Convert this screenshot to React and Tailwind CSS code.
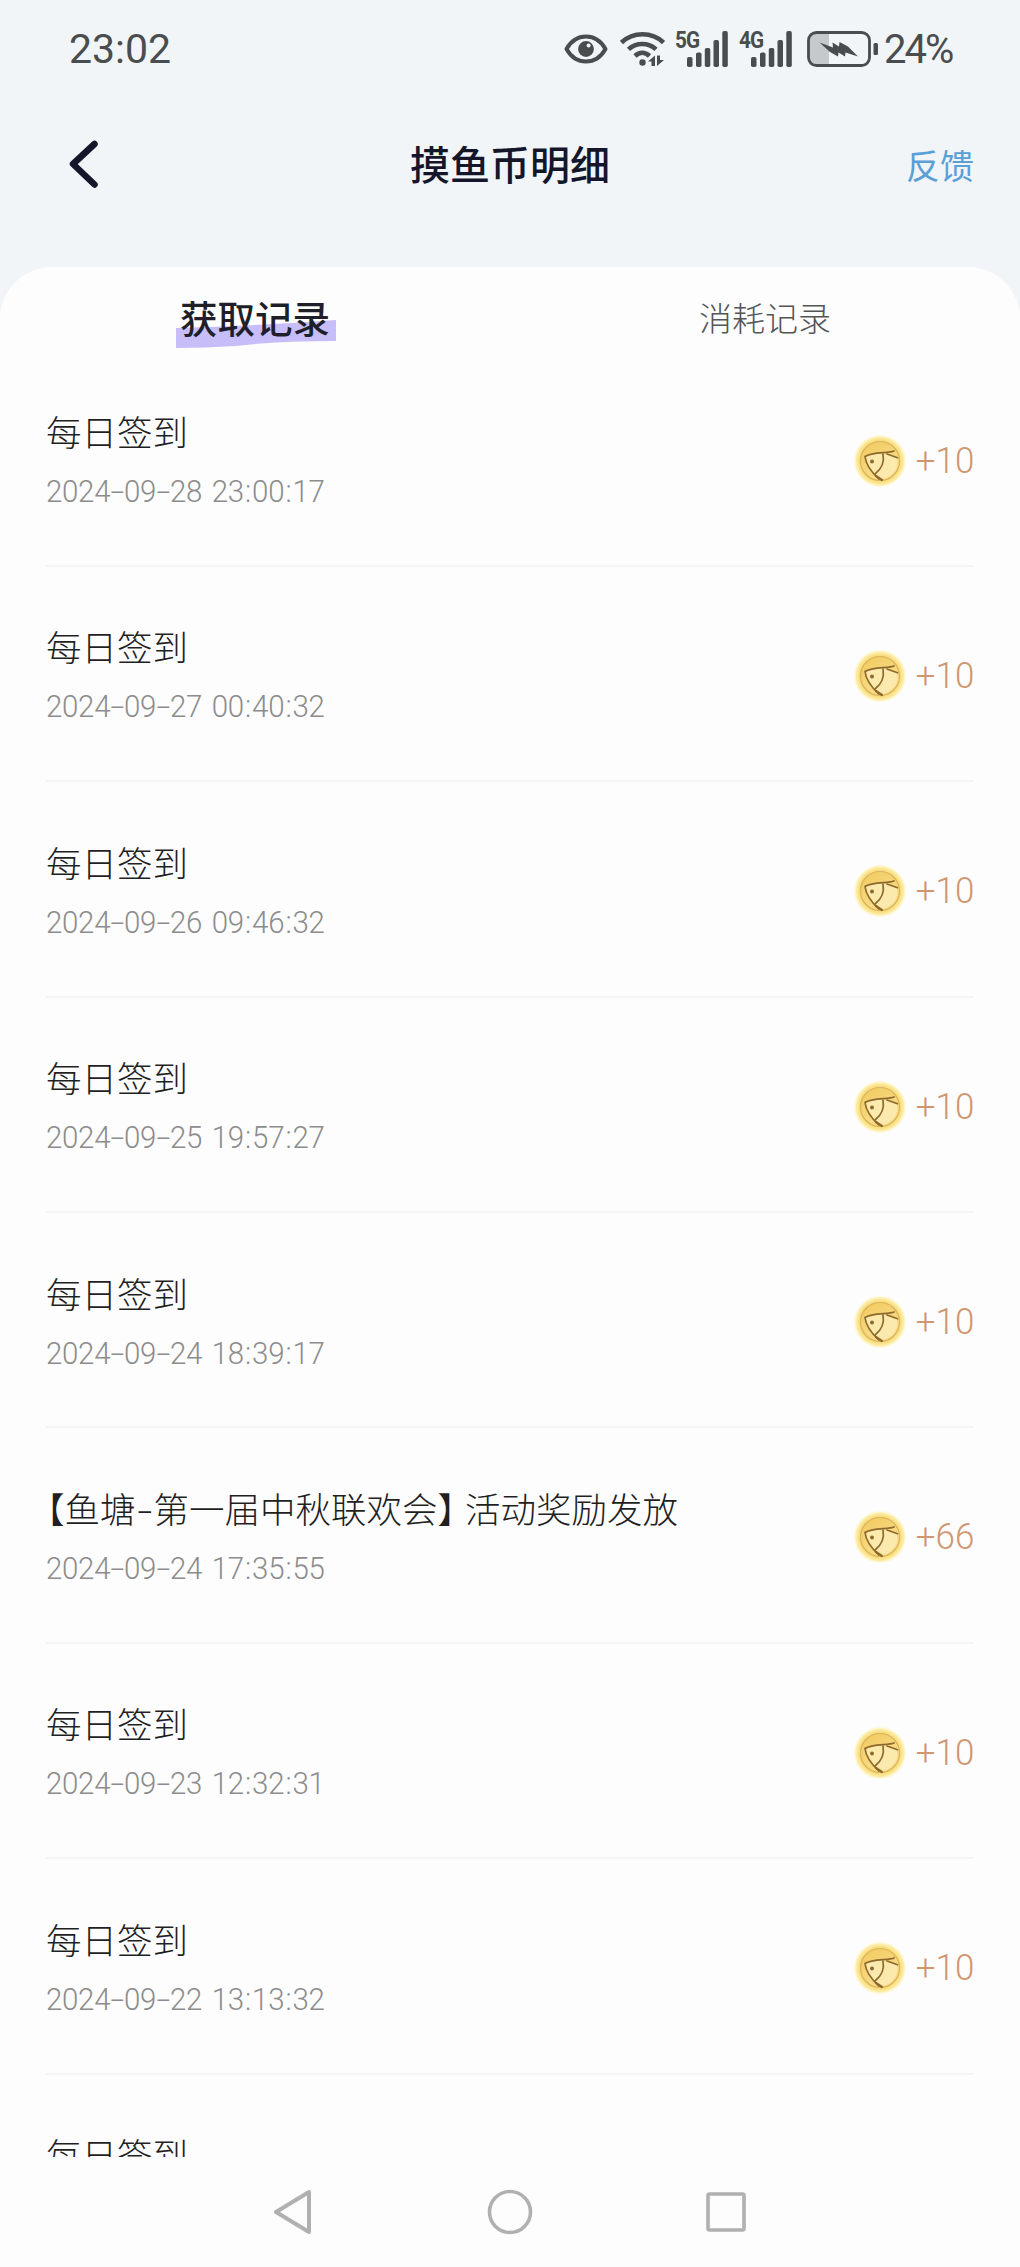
import React from "react";

const records = [
    { id: 1, title: "每日签到", time: "2024-09-28 23:00:17", coin: "+10" },
    { id: 2, title: "每日签到", time: "2024-09-27 00:40:32", coin: "+10" },
    { id: 3, title: "每日签到", time: "2024-09-26 09:46:32", coin: "+10" },
    { id: 4, title: "每日签到", time: "2024-09-25 19:57:27", coin: "+10" },
    { id: 5, title: "每日签到", time: "2024-09-24 18:39:17", coin: "+10" },
    { id: 6, title: "【鱼塘-第一届中秋联欢会】活动奖励发放", time: "2024-09-24 17:35:55", coin: "+66" },
    { id: 7, title: "每日签到", time: "2024-09-23 12:32:31", coin: "+10" },
    { id: 8, title: "每日签到", time: "2024-09-22 13:13:32", coin: "+10" },
    { id: 9, title: "每日签到" },
]

// 标点宽度单独调整
const charClass = {
    "-": "inline-block w-[15px] text-center scale-x-170",
    ":": "inline-block w-[9px] text-center",
}

const titleCharClass = {
    "【": "ml-[-17px]",
    "】": "tracking-[-8px]",
    "-": "inline-block w-[18px] text-center scale-x-150",
}

const SpacedText = ({ text, classes }) => (
    <>
        {text.split(/([-:【】])/).map((part, i) => (
            classes[part] ? <span key={i} className={classes[part]}>{part}</span> : part
        ))}
    </>
)

const EyeIcon = () => (
    <svg width="44" height="30" viewBox="0 0 44 30" fill="none">
        <path d="M2.5 15C7 7 14 2.5 22 2.5S37 7 41.500 15C37 23 30 27.500 22 27.500S7 23 2.500 15Z" stroke="#4a4d4e" strokeWidth="4" strokeLinejoin="round" />
        <circle cx="22" cy="15" r="7.900" fill="#4a4d4e" />
        <circle cx="24.600" cy="11.600" r="2" fill="#f1f5f8" />
    </svg>
)

const WifiIcon = () => (
    <svg width="45" height="36" viewBox="0 0 45 36" fill="none">
        <g stroke="#4a4d4e" strokeWidth="4.600">
            <path d="M1.500 11.500C13 .5 32 .5 43.500 11.500" />
            <path d="M8.500 18.300C16 11.200 28.500 11.200 36 18.300" />
            <path d="M15 25C19.500 20.800 25 20.800 29.500 25" />
        </g>
        <circle cx="22.500" cy="31.500" r="3.200" fill="#4a4d4e" />
        <path d="M35 24.500v10.500h-3.500v-4.500h-3.500zM37 24.500v10.500l7-6h-4v-4.500z" fill="#4a4d4e" />
    </svg>
)

const SignalIcon = ({ label }) => (
    <div className="relative w-[53px] h-[36px]">
        <span className="absolute left-0 top-[-1px] origin-left scale-x-90 text-[23px] leading-[21px] font-bold tracking-[-1px] text-[#4a4d4e]">{label}</span>
        <svg className="absolute right-0 bottom-0" width="41" height="36" viewBox="0 0 41 36" fill="#4a4d4e">
            <rect x="0" y="26" width="5.500" height="10" rx="1.800" />
            <rect x="9" y="21.500" width="5.500" height="14.500" rx="1.800" />
            <rect x="17.800" y="17" width="5.500" height="19" rx="1.800" />
            <rect x="26.500" y="9" width="5.500" height="27" rx="1.800" />
            <rect x="35.300" y="0" width="5.500" height="36" rx="1.800" />
        </svg>
    </div>
)

const BatteryIcon = () => (
    <svg width="72" height="36" viewBox="0 0 72 36" fill="none">
        <path d="M2 9a8 8 0 0 1 8-7h12v32H10a8 8 0 0 1-8-7z" fill="#c6c9cb" />
        <rect x="1.500" y="1.500" width="61" height="33" rx="8" stroke="#4a4d4e" strokeWidth="2.800" />
        <rect x="66.500" y="12" width="4.500" height="12" rx="1.500" fill="#4a4d4e" />
        <path d="M12.500 11.500L26 16.500L25.500 11.500L32 15.500L32.500 11L41 15.500L51 25.500L38.500 21.500L38 25.500L31.500 21.500L31 25.500L23 21Z" fill="#4a4d4e" />
    </svg>
)

const CoinIcon = () => (
    <svg width="54" height="54" viewBox="0 0 54 54" fill="none">
        <defs>
            <radialGradient id="glow" cx=".5" cy=".5" r=".5">
                <stop offset=".74" stopColor="#f7d978" />
                <stop offset=".88" stopColor="#fdeea6" />
                <stop offset="1" stopColor="#fffae0" stopOpacity="0" />
            </radialGradient>
            <linearGradient id="face" x1=".2" y1="0" x2=".8" y2="1">
                <stop offset="0" stopColor="#f2cb62" />
                <stop offset="1" stopColor="#fae293" />
            </linearGradient>
        </defs>
        <circle cx="27" cy="27" r="27" fill="url(#glow)" />
        <circle cx="27" cy="27" r="19.500" fill="url(#face)" stroke="#dcb45a" strokeWidth="1.200" />
        <path d="M12 23C18 19.500 25 19 31 19.500L43.500 23C47 33 39 45 26 45.500L22 40C17 36 13.500 30 12 23Z" fill="#fce9ad" />
        <g stroke="#8d6a2c" strokeWidth="1.700" strokeLinecap="round" strokeLinejoin="round">
            <path d="M41 17C36 19.500 19 17.500 12 22.500C13 31 17 37 26 45" />
            <path d="M30 20C31.500 28 28.500 35 22 40" />
            <path d="M34 20L44.500 23.700" />
        </g>
        <path d="M23 42L29 46" stroke="#8d6a2c" strokeWidth="2.200" strokeLinecap="round" />
        <circle cx="19" cy="27.500" r="2" fill="#8d6a2c" />
    </svg>
)

const StatusBar = () => {
    return (
        <div className="flex justify-between h-[96px] pl-[69px] pr-[64px] pt-[24px] text-[#4a4d4e]">
            <p className="text-[41px] leading-[50px]">23:02</p>
            <div className="flex h-[50px] items-center">
                <EyeIcon />
                <div className="ml-[12px]"><WifiIcon /></div>
                <div className="ml-[10px]"><SignalIcon label="5G" /></div>
                <div className="ml-[11px]"><SignalIcon label="4G" /></div>
                <div className="ml-[15px]"><BatteryIcon /></div>
                <p className="ml-[5px] w-[72px] pt-[2px] text-[40px] leading-[50px] tracking-[-2px]">24%</p>
            </div>
        </div>
    )
}

const RecordItem = ({ record }) => {
    return (
        <div className="flex shrink-0 h-[215.4px] justify-between items-start border-b-2 border-[#f5f5f6]">
            <div className="pt-[56.500px]">
                <p className="text-[35.5px] leading-[52px] font-light text-[#1f1f24]">
                    <SpacedText text={record.title} classes={titleCharClass} />
                </p>
                {record.time && (
                    <p className="mt-[5px] origin-left scale-x-92 text-[32px] leading-[52px] font-light tracking-[-0.3px] [word-spacing:3px] text-[#8c8c8c]">
                        <SpacedText text={record.time} classes={charClass} />
                    </p>
                )}
            </div>
            {record.coin && (
                <div className="flex items-center pt-[82px]">
                    <CoinIcon />
                    <p className="ml-[7px] origin-right scale-x-97 text-[36px] leading-[54px] font-light text-[#cf9670]">{record.coin}</p>
                </div>
            )}
        </div>
    )
}

const App = () => {
    return (
        <div className="flex flex-col w-[1020px] h-[2267px] bg-[#f1f5f8] overflow-hidden font-[Roboto,'Noto_Sans_CJK_SC',sans-serif]">
            <StatusBar />
            <div className="grid grid-cols-3 h-[171px] px-[46px] pt-[33px] items-start">
                <svg className="ml-[23px]" width="30" height="72" viewBox="0 0 30 72" fill="none">
                    <path d="M25.500 15L4 35L25.500 55.500" stroke="#14172a" strokeWidth="6.500" strokeLinecap="round" strokeLinejoin="round" />
                </svg>
                <p className="text-center text-[40px] leading-[76px] font-medium text-[#14172a] whitespace-nowrap">摸鱼币明细</p>
                <p className="text-right text-[34px] leading-[76px] text-[#5a9fd6]">反馈</p>
            </div>
            <div className="flex flex-col flex-1 min-h-0 rounded-t-[52px] bg-[#fdfdfd]">
                <div className="grid grid-cols-2 h-[84.500px] pt-[17px] text-center leading-[72px]">
                    <div className="relative">
                        <svg className="absolute left-[176px] top-[35px]" width="160" height="30" viewBox="0 0 160 30">
                            <path d="M0 9Q80 7 160 1V22Q100 22 60 27Q30 29 0 29Z" fill="#c6bdf9" />
                        </svg>
                        <span className="relative text-[37.5px] font-medium text-[#1f1f2a]">获取记录</span>
                    </div>
                    <span className="text-[33px] font-light text-[#555555]">消耗记录</span>
                </div>
                <div className="flex flex-col flex-1 min-h-0 px-[46px] overflow-hidden">
                    {records.map((record) => (
                        <RecordItem key={record.id} record={record} />
                    ))}
                </div>
                <div className="flex shrink-0 h-[110px] items-center justify-center gap-[173px]">
                    <svg width="40" height="46" viewBox="0 0 40 46" fill="none" stroke="#b0b0b0" strokeWidth="4" strokeLinejoin="round">
                        <path d="M35 3V43L2 23Z" />
                    </svg>
                    <svg width="46" height="46" viewBox="0 0 46 46" fill="none" stroke="#b0b0b0" strokeWidth="3.600">
                        <circle cx="23" cy="23" r="20.500" />
                    </svg>
                    <svg width="40" height="40" viewBox="0 0 40 40" fill="none" stroke="#b0b0b0" strokeWidth="3.600">
                        <rect x="2" y="2" width="36" height="36" rx="1.500" />
                    </svg>
                </div>
            </div>
        </div>
    )
}

export default App;
